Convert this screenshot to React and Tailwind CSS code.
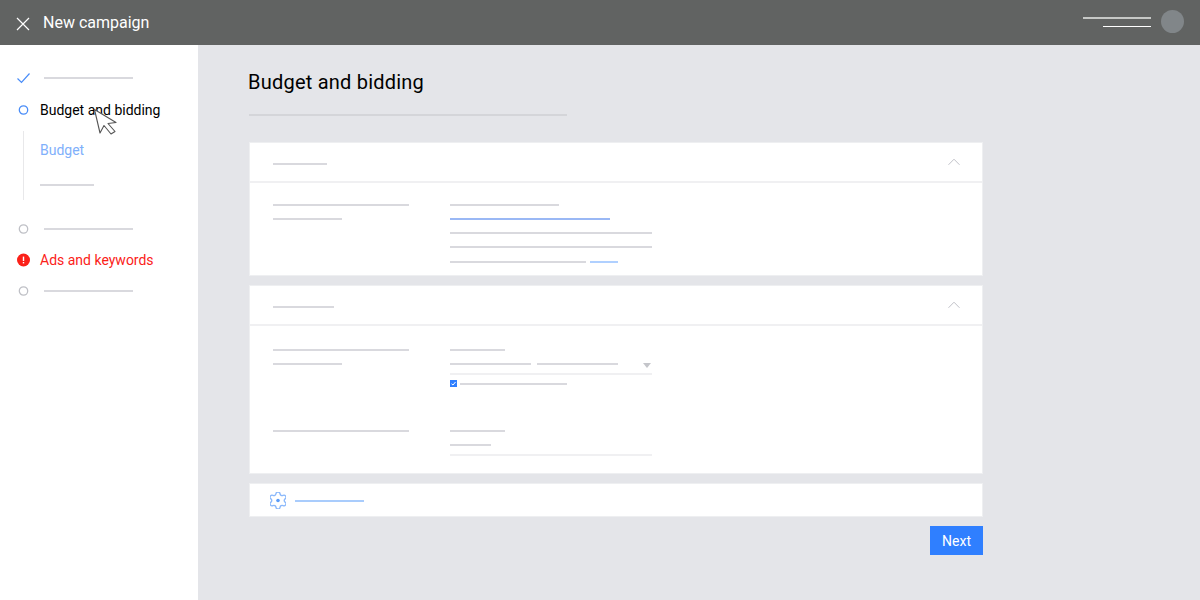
const Bar = ({ className }) => <div className={`h-[2px] shrink-0 ${className}`} />;

function Ring({ color }) {
  return (
    <svg width="15" height="14" viewBox="0 0 15 14" className="shrink-0">
      <circle cx="7.5" cy="7" r="4.2" fill="none" stroke={color} strokeWidth="1.3" />
    </svg>
  );
}

function Chevron() {
  return (
    <svg width="12" height="8" viewBox="0 0 12 8" fill="none" stroke="#c0c1c8" strokeWidth="1">
      <path d="M0.5 6.8L6 1.2L11.5 6.8" />
    </svg>
  );
}

function CardHeader({ barWidth }) {
  return (
    <div className="flex items-center justify-between pl-[23px] pr-[22px] border-b-2 border-[#f0f0f2] h-[40px]">
      <Bar className={`bg-[#d9d9de] mt-[4px] ${barWidth}`} />
      <Chevron />
    </div>
  );
}

export default function App() {
  return (
    <div className="relative w-[1200px] h-[600px] overflow-hidden flex flex-col bg-[#e4e5e9] font-['Roboto',sans-serif]">
      <header className="h-[45px] shrink-0 bg-[#616362] flex items-center pl-[16px] pr-4">
        <svg width="14" height="14" viewBox="0 0 14 14" fill="none" stroke="#fff" strokeWidth="1.2" className="mt-[3px]">
          <path d="M1 1L13 13M13 1L1 13" />
        </svg>
        <span className="ml-[13px] text-white text-base">New campaign</span>
        <div className="ml-auto flex items-center gap-[10px]">
          <div className="flex flex-col items-end gap-[7px] mt-[-1px]">
            <div className="h-[2px] w-[68px] bg-[#c6c8c6]" />
            <div className="h-px w-[48px] bg-white" />
          </div>
          <div className="w-[23px] h-[23px] rounded-full bg-[#818689] mt-[-2px]" />
        </div>
      </header>
      <div className="flex flex-1 min-h-0">
        <aside className="w-[198px] shrink-0 bg-white pt-[24px] pl-4 text-sm">
          <div className="flex items-center h-[18px]">
            <svg width="15" height="12" viewBox="0 0 15 12" fill="none" stroke="#4a8df8" strokeWidth="1.2" className="shrink-0">
              <path d="M1.5 6.5L5.5 10.5L13.5 1.5" />
            </svg>
            <Bar className="w-[89px] bg-[#d9d9de] ml-[13px]" />
          </div>
          <div className="flex items-center h-5 mt-[13px]">
            <Ring color="#4a8df8" />
            <span className="ml-[9px] text-black">Budget and bidding</span>
          </div>
          <div className="ml-[7px] mt-[11px] h-[69px] border-l border-[#e8e8ea] pl-4">
            <div className="text-[#7fb0fb] leading-5 pt-[9px]">Budget</div>
            <Bar className="w-[54px] bg-[#d9d9de] mt-[24px]" />
          </div>
          <div className="flex items-center h-5 mt-[19px]">
            <Ring color="#bfc0c6" />
            <Bar className="w-[89px] bg-[#d9d9de] ml-[13px]" />
          </div>
          <div className="flex items-center h-5 mt-[11px]">
            <svg width="15" height="14" viewBox="0 0 15 14" className="shrink-0">
              <circle cx="7.5" cy="7" r="6.5" fill="#fb2119" />
              <rect x="6.8" y="3.6" width="1.4" height="4.4" fill="#fff" />
              <rect x="6.8" y="9" width="1.4" height="1.4" fill="#fff" />
            </svg>
            <span className="ml-[9px] text-[#fb2119]">Ads and keywords</span>
          </div>
          <div className="flex items-center h-5 mt-[11px]">
            <Ring color="#bfc0c6" />
            <Bar className="w-[89px] bg-[#d9d9de] ml-[13px]" />
          </div>
        </aside>
        <main className="flex-1 pl-[50px]">
          <h1 className="text-xl tracking-[0.22px] text-black leading-7 mt-[23px]">Budget and bidding</h1>
          <Bar className="w-[318px] bg-[#d4d5d9] ml-px mt-[18px]" />
          <div className="w-[734px] ml-px mt-[26px] flex flex-col">
            <section className="h-[134px] bg-white border border-[#eeeff1]">
              <CardHeader barWidth="w-[54px]" />
              <div className="flex pl-[23px] pt-[21px]">
                <div className="w-[177px] flex flex-col gap-3">
                  <Bar className="w-[136px] bg-[#d9d9de]" />
                  <Bar className="w-[69px] bg-[#d9d9de]" />
                </div>
                <div className="flex flex-col gap-3">
                  <Bar className="w-[109px] bg-[#d9d9de]" />
                  <Bar className="w-[160px] bg-[#9ab8f5]" />
                  <Bar className="w-[202px] bg-[#d9d9de]" />
                  <Bar className="w-[202px] bg-[#d9d9de]" />
                  <div className="flex gap-1 mt-px">
                    <Bar className="w-[136px] bg-[#d9d9de]" />
                    <Bar className="w-[28px] bg-[#b0d0ff]" />
                  </div>
                </div>
              </div>
            </section>
            <section className="h-[189px] mt-[9px] bg-white border border-[#eeeff1]">
              <CardHeader barWidth="w-[61px]" />
              <div className="flex pl-[23px] pt-[23px]">
                <div className="w-[177px] flex flex-col gap-3">
                  <Bar className="w-[136px] bg-[#d9d9de]" />
                  <Bar className="w-[69px] bg-[#d9d9de]" />
                </div>
                <div className="w-[202px] flex flex-col">
                  <Bar className="w-[55px] bg-[#d9d9de]" />
                  <div className="flex items-center h-[2px] mt-3">
                    <Bar className="w-[81px] bg-[#d9d9de]" />
                    <Bar className="w-[81px] bg-[#d9d9de] ml-[6px]" />
                    <svg width="8" height="5" viewBox="0 0 8 5" className="ml-[25px] mt-[2px] shrink-0">
                      <path d="M0 0H8L4 5Z" fill="#c4c5ca" />
                    </svg>
                  </div>
                  <Bar className="w-full bg-[#f0f0f2] mt-2" />
                  <div className="flex items-center mt-[5px]">
                    <div className="w-[7px] h-[7px] bg-[#2f7fff] flex items-center justify-center">
                      <svg width="5" height="5" viewBox="0 0 5 5" fill="none" stroke="#fff" strokeWidth="1">
                        <path d="M0.5 2.8L2 4L4.5 1" />
                      </svg>
                    </div>
                    <Bar className="w-[107px] bg-[#d9d9de] ml-[3px]" />
                  </div>
                </div>
              </div>
              <div className="flex pl-[23px] mt-[43px]">
                <div className="w-[177px]">
                  <Bar className="w-[136px] bg-[#d9d9de]" />
                </div>
                <div className="w-[202px] flex flex-col">
                  <Bar className="w-[55px] bg-[#d9d9de]" />
                  <Bar className="w-[41px] bg-[#d9d9de] mt-3" />
                  <Bar className="w-full bg-[#f0f0f2] mt-2" />
                </div>
              </div>
            </section>
            <section className="h-[34px] mt-[9px] bg-white border border-[#eeeff1] flex items-center pl-[20px]">
              <svg width="16" height="17" viewBox="3 2 18 20" preserveAspectRatio="none" fill="none" stroke="#8ab8fb" strokeWidth="1.5" strokeLinejoin="round" className="shrink-0 mt-px">
                <path d="M9.671 4.136a2.34 2.34 0 0 1 4.659 0 2.34 2.34 0 0 0 3.319 1.915 2.34 2.34 0 0 1 2.33 4.033 2.34 2.34 0 0 0 0 3.831 2.34 2.34 0 0 1-2.33 4.033 2.34 2.34 0 0 0-3.319 1.915 2.34 2.34 0 0 1-4.659 0 2.34 2.34 0 0 0-3.32-1.915 2.34 2.34 0 0 1-2.33-4.033 2.34 2.34 0 0 0 0-3.831A2.34 2.34 0 0 1 6.35 6.051a2.34 2.34 0 0 0 3.319-1.915" />
                <circle cx="12" cy="12" r="2" fill="#5a9cf9" stroke="none" />
              </svg>
              <Bar className="w-[69px] bg-[#a9ccfc] ml-[9px] mt-[2px]" />
            </section>
            <div className="flex justify-end mt-[9px]">
              <button className="w-[53px] h-[29px] bg-[#2f7fff] text-white text-sm">Next</button>
            </div>
          </div>
        </main>
      </div>
      <svg width="26" height="29" viewBox="0 0 26 29" className="absolute left-[93px] top-[108px]" fill="#fff" stroke="#555" strokeWidth="1.1" strokeLinejoin="round">
        <path d="M1.5 1.5L23 14.5L15 15.5L22 23.5L18 26L11 17.5L7 25Z" />
      </svg>
    </div>
  );
}
